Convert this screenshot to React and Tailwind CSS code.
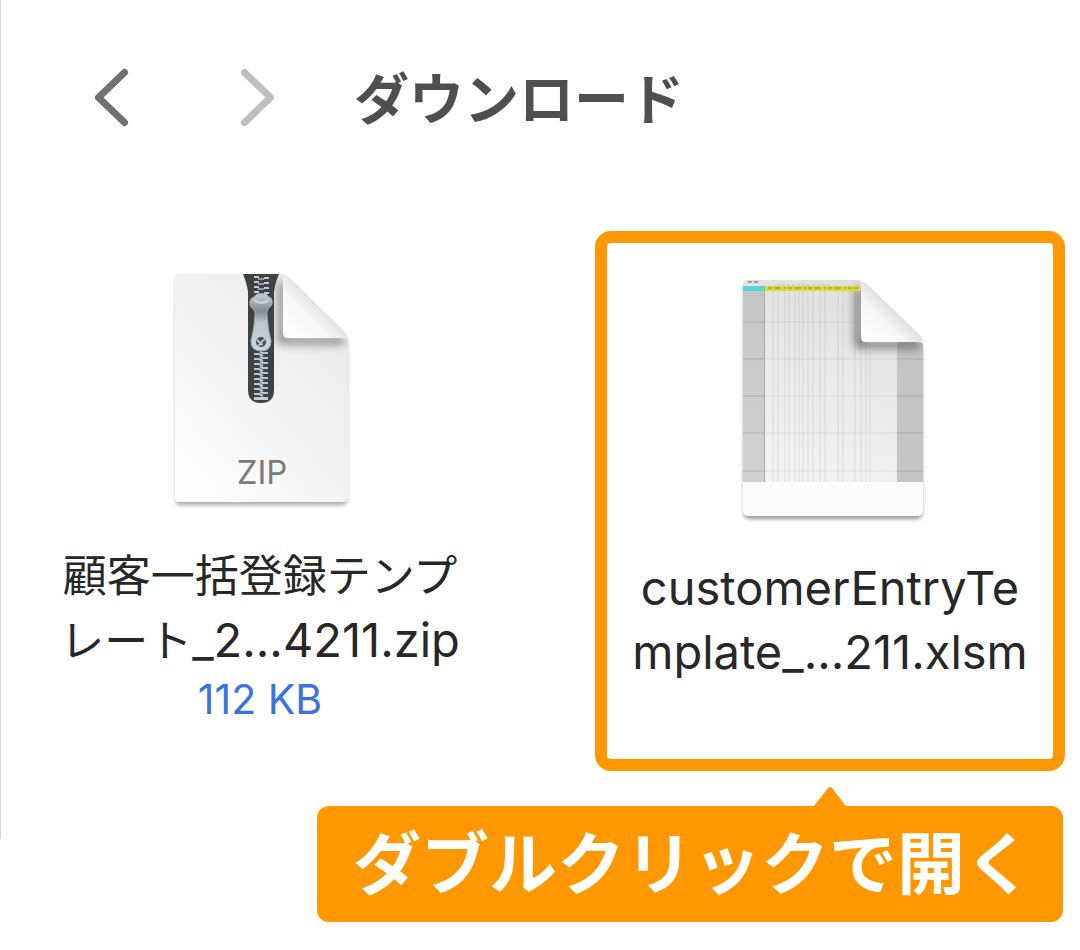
import { useState } from "react";

// x positions of the column rules inside the sheet thumbnail
const columnRules = [
  773, 778, 785, 789, 795, 799, 803, 808, 813, 820, 825, 838, 843, 855, 861, 866, 870,
];
const rowRules = [322, 359, 396, 433, 471];
const upperTeeth = [276, 281, 286, 291];
const lowerTeeth = [353, 358, 363, 368, 373, 378, 383, 388, 393];

function ZipIcon() {
  return (
    <svg className="h-[260px] w-[200px]" viewBox="160 260 200 260" aria-hidden="true">
      <defs>
        <linearGradient id="zipPaper" x1="0.9" y1="0.3" x2="0.3" y2="1">
          <stop offset="0" stopColor="#ececec" />
          <stop offset="0.55" stopColor="#f4f4f4" />
          <stop offset="1" stopColor="#fdfdfd" />
        </linearGradient>
        <linearGradient id="zipFold" x1="0.1" y1="0.9" x2="0.55" y2="0.45">
          <stop offset="0" stopColor="#ffffff" />
          <stop offset="0.6" stopColor="#f8f8f8" />
          <stop offset="1" stopColor="#e2e2e2" />
        </linearGradient>
        <linearGradient id="zipPull" x1="0" y1="0" x2="0" y2="1">
          <stop offset="0" stopColor="#c5ced4" />
          <stop offset="0.3" stopColor="#838b91" />
          <stop offset="0.5" stopColor="#bac5cc" />
          <stop offset="1" stopColor="#cbd5db" />
        </linearGradient>
        <clipPath id="zipShape">
          <path d="M179 274H282L348 338V497Q348 502 343 502H179Q175 502 175 498V278Q175 274 179 274Z" />
        </clipPath>
        <filter id="zipShadow" x="-20%" y="-20%" width="140%" height="140%">
          <feGaussianBlur stdDeviation="2" />
        </filter>
        <filter id="zipFoldShadow" x="-40%" y="-40%" width="180%" height="180%">
          <feGaussianBlur stdDeviation="5" />
        </filter>
      </defs>
      <path
        d="M180 277H282L347 340V500Q347 505 342 505H180Q176 505 176 501V281Q176 277 180 277Z"
        fill="#000"
        opacity="0.35"
        filter="url(#zipShadow)"
      />
      <g clipPath="url(#zipShape)">
        <rect x="174" y="273" width="175" height="230" fill="url(#zipPaper)" />
        <path
          d="M283 284V333Q283 339 289 339H343V342H280V284Z"
          fill="#000"
          stroke="#000"
          strokeWidth="4"
          opacity="0.45"
          filter="url(#zipFoldShadow)"
        />
        <path
          d="M243 274H279Q275 284 274 292V390Q274 403 261 403Q248 403 248 390V292Q247 284 243 274Z"
          fill="#404143"
        />
        {upperTeeth.map((y) => (
          <g key={y} fill="#bfc9cf">
            <rect x="254" y={y} width="5" height="2" />
            <rect x="264" y={y + 1} width="5" height="2" />
            <rect x="258" y={y + 2} width="6" height="2" fill="#8f999f" />
          </g>
        ))}
        {lowerTeeth.map((y) => (
          <g key={y} fill="none" stroke="#bcc6cc" strokeWidth="2">
            <path d={`M254 ${y + 1}H259L263 ${y + 3}`} />
            <path d={`M260 ${y - 1}L263 ${y}H268`} />
          </g>
        ))}
        <rect x="254" y="397" width="14" height="3" fill="#c4ced4" />
        <path
          d="M257 294H266Q268 297 271 298Q274 303 270 307Q266 310 267 316Q268 330 271 341Q271 351 261 351Q251 351 251 341Q254 330 255 316Q256 310 251 307Q248 302 252 298Q255 297 257 294Z"
          fill="url(#zipPull)"
          stroke="#a3adb4"
          strokeWidth="1"
        />
        <path d="M254 300Q261 306 269 300" stroke="#cdd6db" strokeWidth="2" fill="none" />
        <ellipse cx="261" cy="342" rx="5" ry="5" fill="#484c50" />
        <path d="M257 340L260 343L265 339M258 345L263 344" stroke="#b9c3ca" strokeWidth="2" fill="none" />
      </g>
      <path
        d="M282 274Q287 275 291 279L342 329Q348 335 348 340Q346 338 341 338H288Q283 338 283 333V281Q283 276 282 274Z"
        fill="url(#zipFold)"
      />
      <text
        x="262"
        y="484"
        textAnchor="middle"
        fontSize="33"
        fill="#7b7b7b"
        className="font-['Inter','Noto_Sans_CJK_JP',sans-serif]"
      >
        ZIP
      </text>
    </svg>
  );
}

function SheetIcon() {
  return (
    <svg className="h-[260px] w-[200px]" viewBox="730 272 200 260" aria-hidden="true">
      <defs>
        <linearGradient id="sheetPaper" x1="0.6" y1="0" x2="0.3" y2="1">
          <stop offset="0" stopColor="#dfdfdf" />
          <stop offset="1" stopColor="#f3f3f3" />
        </linearGradient>
        <linearGradient id="sheetSide" x1="0" y1="0" x2="0" y2="1">
          <stop offset="0" stopColor="#c6c6c6" />
          <stop offset="1" stopColor="#d2d2d2" />
        </linearGradient>
        <linearGradient id="sheetFold" x1="0.1" y1="0.9" x2="0.55" y2="0.45">
          <stop offset="0" stopColor="#ffffff" />
          <stop offset="0.6" stopColor="#f6f6f6" />
          <stop offset="1" stopColor="#dfdfdf" />
        </linearGradient>
        <clipPath id="sheetShape">
          <path d="M747 280H859L923 343V510Q923 516 917 516H749Q743 516 743 510V284Q743 280 747 280Z" />
        </clipPath>
        <filter id="sheetShadow" x="-20%" y="-20%" width="140%" height="140%">
          <feGaussianBlur stdDeviation="2" />
        </filter>
        <filter id="sheetFoldShadow" x="-40%" y="-40%" width="180%" height="180%">
          <feGaussianBlur stdDeviation="5" />
        </filter>
      </defs>
      <path
        d="M748 284H859L922 347V513Q922 519 916 519H750Q744 519 744 513V288Q744 284 748 284Z"
        fill="#000"
        opacity="0.42"
        filter="url(#sheetShadow)"
      />
      <g clipPath="url(#sheetShape)">
        <rect x="742" y="279" width="182" height="204" fill="url(#sheetPaper)" />
        <rect x="742" y="290" width="23" height="193" fill="url(#sheetSide)" />
        <rect x="897" y="290" width="27" height="193" fill="#c4c4c4" />
        {columnRules.map((x) => (
          <path key={x} d={`M${x} 290V482`} stroke="#777" strokeWidth="1" opacity="0.14" />
        ))}
        {rowRules.map((y) => (
          <g key={y} stroke="#777" strokeWidth="2">
            <path d={`M765 ${y}H897`} opacity="0.06" />
            <path d={`M743 ${y}H765M897 ${y}H923`} opacity="0.14" />
          </g>
        ))}
        <path d="M764.5 290V482" stroke="#aaa" />
        <path
          d="M860 290V337Q860 343 866 343H918V346H857V290Z"
          fill="#000"
          stroke="#000"
          strokeWidth="4"
          opacity="0.5"
          filter="url(#sheetFoldShadow)"
        />
        <path d="M748 282H752M754 282H758" stroke="#9a9a9a" strokeWidth="2" />
        <path d="M777 285H830" stroke="#bbb" strokeDasharray="3 2" />
        <rect x="742" y="286" width="23" height="5" fill="#55d9d7" />
        <rect x="765" y="286" width="95" height="5" fill="#dadb35" />
        <path d="M768 288H858" stroke="#b5b62e" strokeWidth="2" strokeDasharray="4 2 7 3 2 2" />
        <rect x="742" y="482" width="182" height="35" fill="#fbfbfb" />
      </g>
      <path
        d="M859 280Q865 282 869 286L918 333Q924 339 923 344Q921 342 916 342H866Q861 342 861 337V286Q861 282 859 280Z"
        fill="url(#sheetFold)"
      />
    </svg>
  );
}

export default function App() {
  const [opened, setOpened] = useState(null);

  return (
    <div className="min-h-screen bg-white pb-[110px] font-['Inter','Noto_Sans_CJK_JP',sans-serif] text-[#272727]">
      <main className="border-l border-[#d8d8d8] pb-[68px]">
        <header className="flex items-center pt-[53px] pb-[90px] pl-[93px]">
          <button type="button" aria-label="戻る" className="text-[#717171]">
            <svg className="h-[60px] w-9" viewBox="0 0 36 60" fill="none">
              <path
                d="M30.5 5.5L4.5 30.5L30.5 55.5"
                stroke="currentColor"
                strokeWidth="7"
                strokeLinecap="round"
                strokeLinejoin="round"
              />
            </svg>
          </button>
          <button type="button" aria-label="進む" className="ml-[110px] text-[#bfbfbf]">
            <svg className="h-[60px] w-9" viewBox="0 0 36 60" fill="none">
              <path
                d="M4.5 5.5L30.5 30.5L4.5 55.5"
                stroke="currentColor"
                strokeWidth="7"
                strokeLinecap="round"
                strokeLinejoin="round"
              />
            </svg>
          </button>
          <h1 className="ml-[78px] pt-1 text-[55px] leading-[84px] font-bold text-[#4f4f4f]">ダウンロード</h1>
        </header>

        <div className="grid grid-cols-2 items-start gap-[100px] pr-[15px] pl-6">
          <button
            type="button"
            onDoubleClick={() => setOpened("zip")}
            aria-pressed={opened === "zip"}
            className="flex flex-col items-center pt-[29px]"
          >
            <ZipIcon />
            <span className="mt-6 text-center text-[47px] leading-[64px] whitespace-nowrap">
              <span className="block text-[44px]">顧客一括登録テンプ</span>
              <span className="block">
                <span className="text-[44px]">レート</span>_2...4211.zip
              </span>
            </span>
            <span className="text-[41px] leading-[52px] text-[#3a73dc]">112 KB</span>
          </button>

          <div className="relative">
            <button
              type="button"
              onDoubleClick={() => setOpened("xlsm")}
              aria-pressed={opened === "xlsm"}
              className="flex w-full flex-col items-center rounded-2xl border-12 border-[#ff9800] pt-[29px] pb-[75px]"
            >
              <SheetIcon />
              <span className="mt-6 text-center text-[47px] leading-[64px] whitespace-nowrap">
                <span className="block">customerEntryTe</span>
                <span className="block">mplate_...211.xlsm</span>
              </span>
            </button>

            <div
              role="tooltip"
              className="absolute top-full right-[2px] mt-[35px] rounded-xl bg-[#ff9800] pr-[30px] pl-9 text-[68px] leading-[116px] font-bold whitespace-nowrap text-white"
            >
              <svg className="absolute right-[217px] bottom-full h-5 w-8" viewBox="0 0 32 20" aria-hidden="true">
                <path d="M0 20L14 2Q16 0 18 2L32 20Z" fill="#ff9800" />
              </svg>
              ダブルクリックで開く
            </div>
          </div>
        </div>
      </main>
    </div>
  );
}
